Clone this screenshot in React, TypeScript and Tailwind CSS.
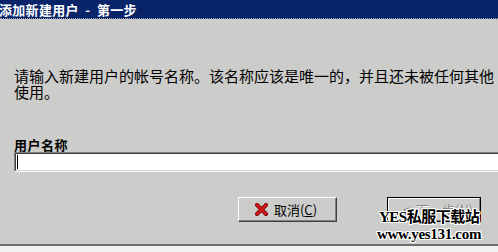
import React from 'react';

const cjk = { fontFamily: '"Noto Sans CJK SC", "Liberation Sans", sans-serif' };

const RedX: React.FC = () => (
  <svg width="13" height="13" viewBox="0 0 13 13" className="shrink-0">
    <path d="M2 2 L11 11 M11 2 L2 11" stroke="#6b0000" strokeWidth="4" strokeLinecap="square" />
    <path d="M2 2 L11 11 M11 2 L2 11" stroke="#d01818" strokeWidth="2.6" strokeLinecap="square" />
  </svg>
);

export default function App() {
  return (
    <div className="relative w-[498px] h-[252px] overflow-hidden bg-[#cccdca] flex flex-col" style={cjk}>
      {/* Title bar */}
      <div className="h-[19px] shrink-0 bg-[#0a246a] flex items-center border-b border-dotted border-[#9aa0b4]">
        <span className="-ml-[1px] text-white font-bold text-[13px] tracking-[0.3px] leading-none whitespace-nowrap">
          添加新建用户 &nbsp;-&nbsp; 第一步
        </span>
      </div>

      {/* Body */}
      <div className="flex-1 flex flex-col pl-[14px]">
        <p className="mt-[49px] text-[15px] leading-[16px] text-black whitespace-nowrap">
          请输入新建用户的帐号名称。该名称应该是唯一的，并且还未被任何其他
          <br />
          使用。
        </p>

        <div className="mt-[37px] text-[13px] leading-[15px] font-bold text-black tracking-[0.5px]">用户名称</div>

        <div className="w-[520px] h-[20px] bg-white border-t border-l border-[#808080] border-b border-r border-b-white border-r-white">
          <div className="h-full border-t border-l border-[#404040] border-b border-r border-b-[#d4d0c8] border-r-[#d4d0c8] flex items-center pl-[1px]">
            <div className="w-[1px] h-[14px] bg-black" />
          </div>
        </div>

        <div className="mt-[25px] flex items-start pl-[224px] gap-[50px]">
          <div className="w-[99px] h-[25px] border-t border-l border-white border-b border-r border-b-[#404040] border-r-[#404040]">
            <div className="h-full border-b border-r border-[#808080] flex items-center justify-center gap-[6px] pr-[2px]">
              <RedX />
              <span className="text-[13px] leading-none text-black">
                取消(<span className="underline">C</span>)
              </span>
            </div>
          </div>
          <div className="w-[94px] h-[25px] border border-black">
            <div className="h-full border-t border-l border-white border-b border-r border-b-[#808080] border-r-[#808080] flex items-start pt-[4px] pl-[14px]">
              <span className="text-[13px] leading-none text-[#8a8a8a] [text-shadow:1px_1px_0_#ffffff] whitespace-nowrap">
                &lt;&nbsp; 下一步(<span className="underline">N</span>)
              </span>
            </div>
          </div>
        </div>
      </div>

      {/* Bottom edge */}
      <div className="h-[8px] shrink-0 border-t-2 border-[#6f6f6f] bg-[#f2f2f0]" />

      {/* Watermark overlay */}
      <div
        className="absolute left-[377px] top-[209px] flex flex-col items-center font-bold text-black leading-[17px] [text-shadow:1px_0_0_#fff,-1px_0_0_#fff,0_1px_0_#fff,0_-1px_0_#fff,1px_1px_0_#fff,-1px_-1px_0_#fff,1px_-1px_0_#fff,-1px_1px_0_#fff]"
        style={{ fontFamily: '"Liberation Serif", "Noto Sans CJK SC", serif' }}
      >
        <span className="text-[15px] tracking-[-0.5px]">YES私服下载站</span>
        <span className="text-[15px] tracking-[-0.3px]">www.yes131.com</span>
      </div>
    </div>
  );
}
